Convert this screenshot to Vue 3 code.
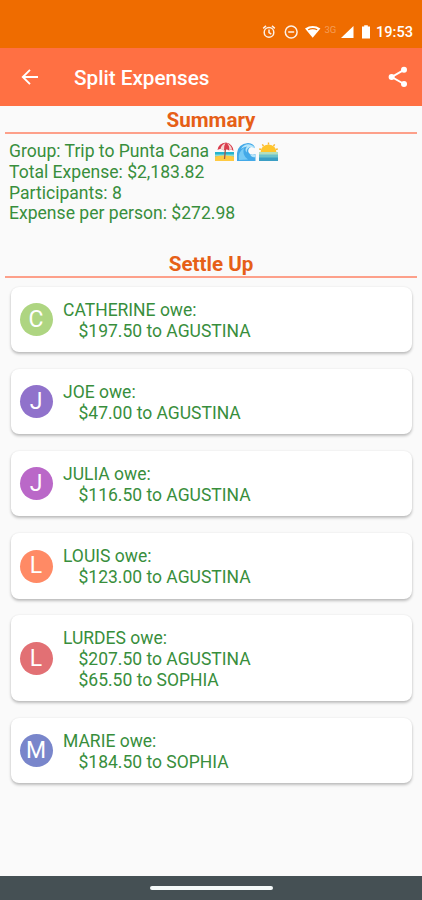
<template>
  <div class="screen">
    <div class="status-bar">
      <svg class="status-bar__icons" width="110" height="20" viewBox="0 0 110 20">
        <g fill="none" stroke="#fff" stroke-width="1.5" opacity="0.9">
          <circle cx="7" cy="10.4" r="4.8" />
          <path d="M7 7.4v3.3l2.3 1.5M1.2 6.4l2.8-2.5M12.8 6.4L10 3.9" />
          <circle cx="29.2" cy="10" r="5.9" />
          <path d="M26.2 10h6" />
        </g>
        <path d="M43 6.4Q50.7 1.6 58.4 6.4L50.7 15.8z" fill="#fff" />
        <path d="M46.2 7.7Q50.7 5.5 55.2 7.7" fill="none" stroke="#ef6c00" stroke-width="1.2" />
        <text x="62.5" y="10.6" class="status-bar__network">3G</text>
        <path d="M91.5 4v12H79z" fill="#fff" />
        <path d="M100 4.6h2.2V3.2h3.6v1.4H108v11.8H100z" fill="#fff" />
      </svg>
      <span class="status-bar__time">19:53</span>
    </div>

    <header class="app-bar">
      <svg class="app-bar__back" width="18" height="18" viewBox="0 0 18 18">
        <path d="M17 9H2M9 1.8L1.8 9L9 16.2" fill="none" stroke="#fff" stroke-width="1.9" />
      </svg>
      <h1 class="app-bar__title">Split Expenses</h1>
      <svg class="app-bar__share" width="22" height="24" viewBox="0 0 22 24">
        <path d="M17 4.8L4.8 12L17 19" fill="none" stroke="#fff" stroke-width="2" />
        <g fill="#fff">
          <circle cx="17" cy="4.8" r="3" />
          <circle cx="4.6" cy="12" r="3" />
          <circle cx="17" cy="19" r="3" />
        </g>
      </svg>
    </header>

    <main class="content">
      <h2 class="heading">Summary</h2>
      <div class="summary">
        <div class="summary__group">
          Group: Trip to Punta Cana
          <svg class="summary__emoji" width="66" height="20" viewBox="0 0 66 20">
            <path d="M1 10h19v5H1z" fill="#25b4cf" />
            <path d="M1 12.5h19v2H1z" fill="#8cdcd7" />
            <path d="M1 14.5q9-2 19 0V19H1z" fill="#ffca42" />
            <path d="M11.5 6l-1 11" stroke="#a75a45" stroke-width="1.3" />
            <path d="M3.5 8Q4.5 1 12 .5Q19 2 19.5 9Q17 7 15 8.5Q12.5 6.5 10 8.5Q7 6 3.5 8z" fill="#d93c4d" />
            <path d="M11.5 1Q7 3 6.5 7.2Q8.5 7 10 8.4Q9.5 4 11.5 1M12.5 1Q16 4 15.2 8.3Q17 7 18.2 8Q17.5 3 12.5 1" fill="#f5d6d2" />

            <path d="M23 19V11Q24 2 34 1Q40 1.5 41 6Q37 4 35 6.5Q33 9.5 36 12Q38.5 13.5 41.5 12V19z" fill="#43a9e8" />
            <path d="M25 18Q23.5 10 30 6Q27.5 13 34 17.5" fill="#76caf5" />
            <path d="M27 7Q30 1.5 36 2.5Q40 3.5 41 6.5Q37 4 34.5 6Q32 8 33 10.5Q30 8 33 4.5Q29 5 27 7zM36 12q3 2 5.5 0v3q-4 1-5.5-3" fill="#b5e5fa" />

            <path d="M46.5 10.5Q47 3 54.5 2.5Q62 3 62.5 10.5z" fill="#ffc52c" />
            <path d="M54.5 2.5V.5M49.5 4L48.3 2.3M59.5 4l1.2-1.7M47 7.5L45.2 6.8M62 7.5l1.8-.7" stroke="#f9b42d" stroke-width="1.4" />
            <path d="M45 10h19v9H45z" fill="#3b9ec4" />
            <path d="M45 10h19v3H45z" fill="#b4dfbd" />
            <path d="M45 12.5h19v3H45z" fill="#6cc3cc" />
          </svg>
        </div>
        <div>Total Expense: $2,183.82</div>
        <div>Participants: 8</div>
        <div>Expense per person: $272.98</div>
      </div>

      <h2 class="heading heading--settle">Settle Up</h2>
      <ul class="debts">
        <li v-for="debt in debts" :key="debt.name" class="card">
          <div class="card__avatar" :style="{ backgroundColor: debt.color }">{{ debt.name[0] }}</div>
          <div class="card__body">
            <div>{{ debt.name }} owe:</div>
            <div v-for="payment in debt.payments" :key="payment.to" class="card__payment">
              ${{ payment.amount }} to {{ payment.to }}
            </div>
          </div>
        </li>
      </ul>
    </main>

    <div class="nav-bar">
      <div class="nav-bar__handle" />
    </div>
  </div>
</template>

<script setup>
const debts = [
  { name: 'CATHERINE', color: '#aed581', payments: [{ amount: '197.50', to: 'AGUSTINA' }] },
  { name: 'JOE', color: '#9072cb', payments: [{ amount: '47.00', to: 'AGUSTINA' }] },
  { name: 'JULIA', color: '#ba68c8', payments: [{ amount: '116.50', to: 'AGUSTINA' }] },
  { name: 'LOUIS', color: '#ff8a65', payments: [{ amount: '123.00', to: 'AGUSTINA' }] },
  {
    name: 'LURDES',
    color: '#e27074',
    payments: [
      { amount: '207.50', to: 'AGUSTINA' },
      { amount: '65.50', to: 'SOPHIA' },
    ],
  },
  { name: 'MARIE', color: '#7986cb', payments: [{ amount: '184.50', to: 'SOPHIA' }] },
]
</script>

<style>
body {
  margin: 0;
}
</style>

<style scoped>
.screen {
  display: flex;
  flex-direction: column;
  height: 900px;
  overflow: hidden;
  background: #fafafa;
  color: #388e3c;
  font-family: Roboto, "Liberation Sans", sans-serif;
  font-size: 17.5px;
  line-height: 20.7px;
}

.status-bar {
  display: flex;
  align-items: center;
  justify-content: flex-end;
  gap: 4px;
  height: 48px;
  padding: 16px 9px 0 0;
  box-sizing: border-box;
  flex-shrink: 0;
  background: #ef6c00;
  color: #fff;
}

.status-bar__network {
  fill: #fff;
  fill-opacity: 0.35;
  font-size: 9.5px;
}

.status-bar__time {
  font-size: 14.6px;
  font-weight: 500;
}

.app-bar {
  display: flex;
  align-items: center;
  height: 57.5px;
  padding: 0 13px 0 21px;
  flex-shrink: 0;
  background: #ff7043;
  color: #fff;
}

.app-bar__title {
  flex: 1;
  margin: 3px 0 0 35px;
  font-size: 20.7px;
  font-weight: 500;
  line-height: 24px;
}

.content {
  flex: 1;
  padding: 2.5px 5px 0;
}

.heading {
  margin: 0;
  height: 24px;
  border-bottom: 2px solid #fda08a;
  color: #e65f17;
  font-size: 20.6px;
  font-weight: 700;
  line-height: 25px;
  text-align: center;
}

.heading--settle {
  margin-top: 28px;
}

.summary {
  padding: 7.4px 4px 0;
  font-size: 17.57px;
}

.summary__group {
  display: flex;
  align-items: center;
  gap: 5px;
  height: 20.7px;
  white-space: nowrap;
}

.debts {
  display: flex;
  flex-direction: column;
  gap: 16.9px;
  margin: 0;
  padding: 8.9px 5px 0 6px;
  list-style: none;
}

.card {
  display: flex;
  align-items: center;
  gap: 10.5px;
  padding: 13px 8.5px 10.8px;
  border-radius: 8px;
  background: #fff;
  box-shadow: 0 2px 3px rgba(0, 0, 0, 0.24), 0 0 2px rgba(0, 0, 0, 0.08);
}

.card__avatar {
  display: flex;
  align-items: center;
  justify-content: center;
  width: 33px;
  height: 33px;
  margin-top: -2px;
  padding-top: 1px;
  box-sizing: border-box;
  border-radius: 50%;
  color: #fff;
  font-size: 23px;
}

.card__payment {
  padding-left: 15.5px;
}

.nav-bar {
  display: flex;
  justify-content: center;
  height: 24px;
  padding-top: 10px;
  box-sizing: border-box;
  flex-shrink: 0;
  background: #455054;
}

.nav-bar__handle {
  width: 123px;
  height: 4px;
  border-radius: 2px;
  background: #f5fafa;
}
</style>
